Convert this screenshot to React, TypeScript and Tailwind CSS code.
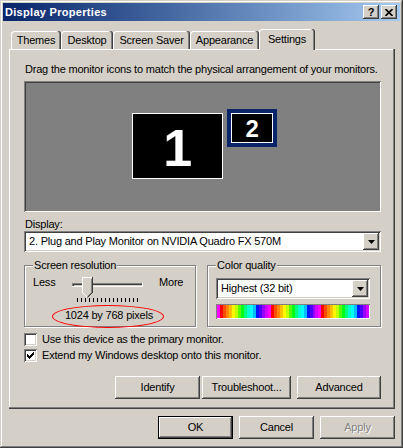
import React from "react";

const raised =
  "shadow-[inset_-1px_-1px_#404040,inset_1px_1px_#fff,inset_-2px_-2px_#808080,inset_2px_2px_#d4d0c8]";
const sunken =
  "shadow-[inset_1px_1px_#808080,inset_-1px_-1px_#fff,inset_2px_2px_#404040,inset_-2px_-2px_#d4d0c8]";
const well = "shadow-[inset_1px_1px_#808080,inset_-1px_-1px_#fff,inset_2px_2px_#404040,inset_-2px_-2px_#808080]";
const etched = "border border-[#808080] shadow-[inset_1px_1px_#fff,1px_1px_#fff]";

const tabs = [
  { label: "Themes", w: "w-[50px]" },
  { label: "Desktop", w: "w-[52px]" },
  { label: "Screen Saver", w: "w-[77px]" },
  { label: "Appearance", w: "w-[69px]" },
];

// one period of the colour quality strip
const hues = [300, 0, 18, 32, 45, 58, 75, 100, 125, 150, 168, 180, 195, 235, 258, 275, 290];
const stripes = [...hues, ...hues, ...hues];

function Arrow() {
  return (
    <div className={`flex h-[17px] w-[16px] items-center justify-center bg-[#d4d0c8] ${raised}`}>
      <svg width="7" height="4" viewBox="0 0 7 4">
        <path d="M0 0h7L3.5 4z" fill="#000" />
      </svg>
    </div>
  );
}

function Dropdown({ text, w }: { text: string; w: string }) {
  return (
    <div className={`flex h-[21px] ${w} items-center justify-between bg-white p-[2px] ${sunken}`}>
      <span className="pl-[3px]">{text}</span>
      <Arrow />
    </div>
  );
}

function Check({ checked, label }: { checked?: boolean; label: string }) {
  return (
    <div className="flex h-[16px] items-start">
      <div className={`relative h-[13px] w-[13px] bg-white ${sunken}`}>
        {checked && (
          <svg className="absolute left-[3px] top-[3px]" width="7" height="7" viewBox="0 0 7 7">
            {[2, 3, 4, 3, 2, 1, 0].map((y, x) => (
              <rect key={x} x={x} y={y} width="1" height="3" fill="#000" />
            ))}
          </svg>
        )}
      </div>
      <span className="ml-[5px] leading-[13px]">{label}</span>
    </div>
  );
}

function Btn({ label, w, primary, disabled }: { label: string; w: string; primary?: boolean; disabled?: boolean }) {
  return (
    <div
      className={`flex h-[23px] ${w} items-center justify-center bg-[#d4d0c8] ${raised} ${
        primary ? "border border-black" : ""
      } ${disabled ? "text-[#808080] [text-shadow:1px_1px_#fff]" : ""}`}
    >
      {label}
    </div>
  );
}

function Slider() {
  const ticks = Array.from({ length: 16 }, (_, i) => 6.5 + i * 4);
  return (
    <svg width="73" height="27" viewBox="0 0 73 27" shapeRendering="crispEdges">
      {/* track */}
      <rect x="1" y="7" width="70" height="1" fill="#808080" />
      <rect x="1" y="7" width="1" height="4" fill="#808080" />
      <rect x="2" y="8" width="69" height="1" fill="#404040" />
      <rect x="2" y="8" width="1" height="2" fill="#404040" />
      <rect x="1" y="10" width="71" height="1" fill="#fff" />
      <rect x="71" y="7" width="1" height="4" fill="#fff" />
      {/* thumb */}
      <path d="M11 1h11v15l-5.5 5.5L11 16z" fill="#d4d0c8" shapeRendering="auto" />
      <path d="M11.5 16.5V1.5H21" stroke="#fff" fill="none" />
      <path d="M11.5 16.5l4.5 4.5" stroke="#fff" fill="none" shapeRendering="auto" />
      <path d="M21.5 1v15.5" stroke="#404040" fill="none" />
      <path d="M21.5 16.5l-5 5" stroke="#404040" fill="none" shapeRendering="auto" />
      <path d="M20.5 2.5v14" stroke="#808080" fill="none" />
      <path d="M20.5 16.5l-4 4" stroke="#808080" fill="none" shapeRendering="auto" />
      {/* ticks */}
      {ticks.map((x) => (
        <path key={x} d={`M${x} 22v4`} stroke="#000" />
      ))}
    </svg>
  );
}

export default function App() {
  return (
    <div
      className="flex h-[448px] w-[403px] flex-col bg-[#d4d0c8] p-[3px] font-['Liberation_Sans',Arial,sans-serif] text-[11px] leading-[13px] tracking-[-0.2px] text-black shadow-[inset_-1px_-1px_#404040,inset_1px_1px_#d4d0c8,inset_-2px_-2px_#808080,inset_2px_2px_#fff]"
    >
      {/* title bar */}
      <div className="flex h-[18px] items-center justify-between bg-linear-to-r from-[#0a246a] to-[#a6caf0] pl-[2px] pr-[3px]">
        <span className="font-bold tracking-[0.3px] text-white">Display Properties</span>
        <div className="flex gap-[2px]">
          <div className={`flex h-[14px] w-[16px] items-center justify-center bg-[#d4d0c8] ${raised}`}>
            <span className="text-[11px] font-bold leading-none">?</span>
          </div>
          <div className={`flex h-[14px] w-[16px] items-center justify-center bg-[#d4d0c8] ${raised}`}>
            <svg width="8" height="7" viewBox="0 0 8 7">
              <path d="M0.5 0L7.5 7M7.5 0L0.5 7" stroke="#000" strokeWidth="1.6" />
            </svg>
          </div>
        </div>
      </div>

      <div className="flex flex-1 flex-col pl-[6px] pt-[8px]">
        {/* tabs */}
        <div className="flex h-[20px] items-end pl-[2px]">
          {tabs.map((t) => (
            <div
              key={t.label}
              className={`flex h-[18px] ${t.w} items-center justify-center rounded-t-[3px] shadow-[inset_-1px_0_#404040,inset_-2px_0_#808080,inset_1px_1px_#fff]`}
            >
              {t.label}
            </div>
          ))}
          <div className="relative z-10 -mb-px flex h-[21px] w-[56px] items-center justify-center rounded-t-[3px] bg-[#d4d0c8] pb-[1px] shadow-[inset_-1px_0_#404040,inset_-2px_0_#808080,inset_1px_1px_#fff]">
            Settings
          </div>
        </div>

        {/* panel */}
        <div className="h-[360px] w-[386px] pl-[15px] pt-[14px] shadow-[inset_-1px_-1px_#404040,inset_-2px_-2px_#808080,inset_1px_1px_#fff]">
          <div className="pl-[1px]">Drag the monitor icons to match the physical arrangement of your monitors.</div>

          <div className={`relative mt-[5px] h-[131px] w-[357px] bg-[#808080] ${well}`}>
            <div className="absolute left-[108px] top-[32px] flex h-[66px] w-[91px] items-center justify-center border border-white bg-black pt-[3px] text-[52px] font-bold leading-none text-white">
              1
            </div>
            <div className="absolute left-[203px] top-[28px] h-[38px] w-[50px] bg-[#0a246a] p-[4px]">
              <div className="flex h-full w-full items-center justify-center border border-white bg-black pt-[1px] text-[24px] font-bold leading-none text-white">
                2
              </div>
            </div>
          </div>

          <div className="mt-[6px] pl-[1px]">Display:</div>
          <Dropdown text="2. Plug and Play Monitor on NVIDIA Quadro FX 570M" w="w-[357px]" />

          <div className="mt-[13px] flex">
            {/* screen resolution */}
            <div className={`relative h-[62px] w-[172px] ${etched}`}>
              <span className="absolute -top-[7px] left-[8px] bg-[#d4d0c8] px-[1px]">Screen resolution</span>
              <div className="flex items-start pl-[8px] pt-[10px]">
                <span className="w-[38px]">Less</span>
                <Slider />
                <span className="ml-[15px]">More</span>
              </div>
              <div className="mt-[6px] pr-[2px] text-center">1024 by 768 pixels</div>
              <div className="absolute left-[27px] top-[39px] h-[23px] w-[112px] rounded-[50%] border border-[#ff0000]" />
            </div>

            {/* color quality */}
            <div className={`relative ml-[11px] h-[62px] w-[174px] ${etched}`}>
              <span className="absolute -top-[7px] left-[8px] bg-[#d4d0c8] px-[1px]">Color quality</span>
              <div className="pl-[8px] pt-[12px]">
                <Dropdown text="Highest (32 bit)" w="w-[154px]" />
                <div className="mt-[5px] flex h-[15px] w-[154px] p-px shadow-[inset_1px_1px_#808080,inset_-1px_-1px_#fff]">
                  {stripes.map((h, i) => (
                    <div key={i} className="h-full flex-1" style={{ background: `hsl(${h} 100% 50%)` }} />
                  ))}
                </div>
              </div>
            </div>
          </div>

          <div className="mt-[6px]">
            <Check label="Use this device as the primary monitor." />
            <Check checked label="Extend my Windows desktop onto this monitor." />
          </div>

          <div className="mt-[11px] flex w-[357px] justify-end">
            <Btn label="Identify" w="w-[85px]" />
            <div className="w-[2px]" />
            <Btn label="Troubleshoot..." w="w-[89px]" />
            <div className="w-[6px]" />
            <Btn label="Advanced" w="w-[84px]" />
          </div>
        </div>

        {/* dialog buttons */}
        <div className="mt-[7px] flex justify-end gap-[6px] pr-[5px]">
          <Btn label="OK" w="w-[75px]" primary />
          <Btn label="Cancel" w="w-[75px]" />
          <Btn label="Apply" w="w-[75px]" disabled />
        </div>
      </div>
    </div>
  );
}
